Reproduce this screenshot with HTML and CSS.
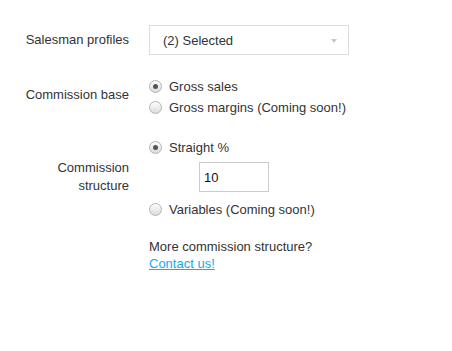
FILE: index.html
```html
<!DOCTYPE html>
<html>
<head>
<meta charset="utf-8">
<link rel="stylesheet" href="styles.css">
</head>
<body>
<form class="form">
  <div class="row row-profiles">
    <div class="label">Salesman profiles</div>
    <div class="control">
      <div class="select">
        <span class="select-text">(2) Selected</span>
        <span class="caret"></span>
      </div>
    </div>
  </div>

  <div class="row row-base">
    <div class="label label-shift">Commission base</div>
    <div class="control">
      <div class="radio-line"><span class="radio checked"></span><span>Gross sales</span></div>
      <div class="radio-line"><span class="radio"></span><span>Gross margins (Coming soon!)</span></div>
    </div>
  </div>

  <div class="row row-structure">
    <div class="label label-shift">Commission structure</div>
    <div class="control">
      <div class="radio-line"><span class="radio checked"></span><span>Straight %</span></div>
      <div class="input-wrap"><div class="input">10</div></div>
      <div class="radio-line variables"><span class="radio"></span><span>Variables (Coming soon!)</span></div>
    </div>
  </div>

  <div class="row row-more">
    <div class="label"></div>
    <div class="control more">
      <div>More commission structure?</div>
      <a class="link" href="#">Contact us!</a>
    </div>
  </div>
</form>
</body>
</html>
```
FILE: styles.css
```css
html, body {
  margin: 0;
  padding: 0;
  background: #fff;
}
body {
  font-family: "Liberation Sans", Arial, sans-serif;
  font-size: 13px;
  color: #333;
}
.form {
  padding-top: 25px;
  padding-left: 25px;
}
.row {
  display: grid;
  grid-template-columns: 104px 1fr;
  column-gap: 20px;
  align-items: center;
}
.label {
  text-align: right;
  line-height: 18px;
}
.label-shift {
  padding-bottom: 4px;
}
.row-base {
  margin-top: 21px;
}
.row-structure {
  margin-top: 19px;
}
.row-more {
  margin-top: 18px;
  align-items: start;
}
.select {
  box-sizing: border-box;
  width: 200px;
  height: 30px;
  border: 1px solid #ddd;
  display: flex;
  align-items: center;
  justify-content: space-between;
  padding: 0 11px 0 13px;
}
.caret {
  width: 0;
  height: 0;
  border-left: 3.5px solid transparent;
  border-right: 3.5px solid transparent;
  border-top: 4px solid #c8c8c8;
  margin-top: 2px;
}
.radio-line {
  display: flex;
  align-items: center;
  height: 21px;
  gap: 7px;
}
.radio {
  box-sizing: border-box;
  width: 13px;
  height: 13px;
  border-radius: 50%;
  border: 1px solid #b4b4b4;
  background: linear-gradient(#fdfdfd, #dcdcdc);
  display: flex;
  align-items: center;
  justify-content: center;
  flex: none;
}
.radio.checked::after {
  content: "";
  width: 5px;
  height: 5px;
  border-radius: 50%;
  background: #555;
}
.input-wrap {
  margin-top: 4px;
  padding-left: 50px;
}
.input {
  box-sizing: border-box;
  width: 70px;
  height: 30px;
  border: 1px solid #ccc;
  display: flex;
  align-items: center;
  padding-left: 4px;
  color: #111;
}
.variables {
  margin-top: 7px;
}
.more {
  line-height: 17px;
}
.link {
  color: #1aa7ec;
  text-decoration: underline;
}
```
